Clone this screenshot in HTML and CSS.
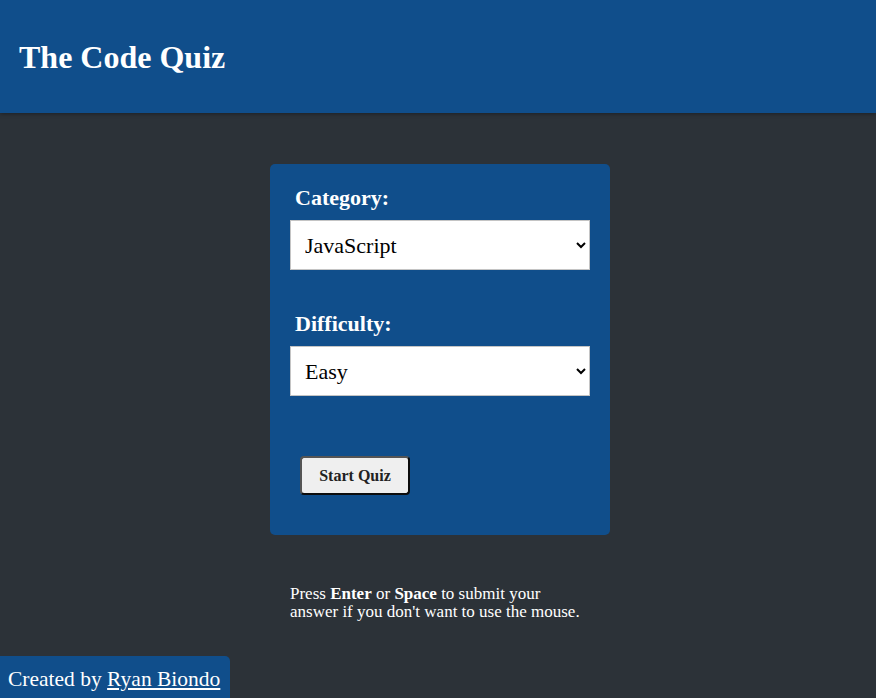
FILE: index.html
```html
<!DOCTYPE html>
<html lang="en">
<head>
<meta charset="utf-8">
<title>The Code Quiz</title>
<link rel="stylesheet" href="styles.css">
</head>
<body>
<header class="site-header">
  <h1 class="site-title">The Code Quiz</h1>
</header>
<main class="main">
  <div class="column">
    <form class="card">
      <div class="field">
        <label class="field-label" for="category">Category:</label>
        <select class="field-select" id="category">
          <option>JavaScript</option>
        </select>
      </div>
      <div class="field">
        <label class="field-label" for="difficulty">Difficulty:</label>
        <select class="field-select" id="difficulty">
          <option>Easy</option>
        </select>
      </div>
      <button type="button" class="start-btn">Start Quiz</button>
    </form>
    <p class="note">Press <strong>Enter</strong> or <strong>Space</strong> to submit your answer if you don't want to use the mouse.</p>
  </div>
</main>
<footer class="site-footer">Created by <a class="footer-link" href="#">Ryan Biondo</a></footer>
</body>
</html>
```
FILE: styles.css
```css
* { box-sizing: border-box; }
html, body { height: 100%; }
body {
  margin: 0;
  min-height: 100vh;
  display: flex;
  flex-direction: column;
  background: #2c3238;
  color: #fff;
  font-family: "Liberation Serif", "Times New Roman", serif;
}
.site-header {
  background: #104e8b;
  height: 113px;
  padding: 0 19px;
  display: flex;
  align-items: center;
  box-shadow: 0 1px 4px rgba(0, 0, 0, 0.35);
}
.site-title {
  margin: 0;
  font-size: 32px;
  font-weight: bold;
  line-height: 37px;
  padding-top: 2px;
}
.main {
  padding-top: 51px;
  padding-left: 4px;
}
.column {
  width: 340px;
  margin: 0 auto;
}
.card {
  background: #104e8b;
  border-radius: 5px;
  padding: 20px 20px 40px;
  display: flex;
  flex-direction: column;
  align-items: flex-start;
}
.field { width: 100%; }
.field + .field { margin-top: 40px; }
.field-label {
  display: block;
  font-size: 22px;
  font-weight: bold;
  line-height: 28px;
  padding-left: 5px;
  margin-bottom: 8px;
}
.field-select {
  display: block;
  width: 300px;
  height: 50px;
  padding: 0 10px 0 10px;
  font-family: inherit;
  font-size: 22px;
  color: #000;
  background: #fff;
  border: 1px solid #c4c4c4;
  border-radius: 0;
}
.start-btn {
  margin-top: 60px;
  margin-left: 10px;
  width: 110px;
  height: 39px;
  padding: 0;
  font-family: inherit;
  font-size: 16px;
  font-weight: bold;
  color: #222;
  background: #efefef;
  border: 2px solid;
  border-color: #555 #0d0d0d #0d0d0d #555;
  border-radius: 4px;
}
.note {
  margin: 50px 0 0 20px;
  width: 300px;
  font-size: 17px;
  line-height: 18px;
}
.note strong { font-weight: bold; }
.site-footer {
  margin-top: auto;
  align-self: flex-start;
  background: #104e8b;
  border-top-right-radius: 5px;
  padding: 10px 10px 6px 8px;
  font-size: 21.5px;
  line-height: 26px;
}
.footer-link { color: #fff; }
```
